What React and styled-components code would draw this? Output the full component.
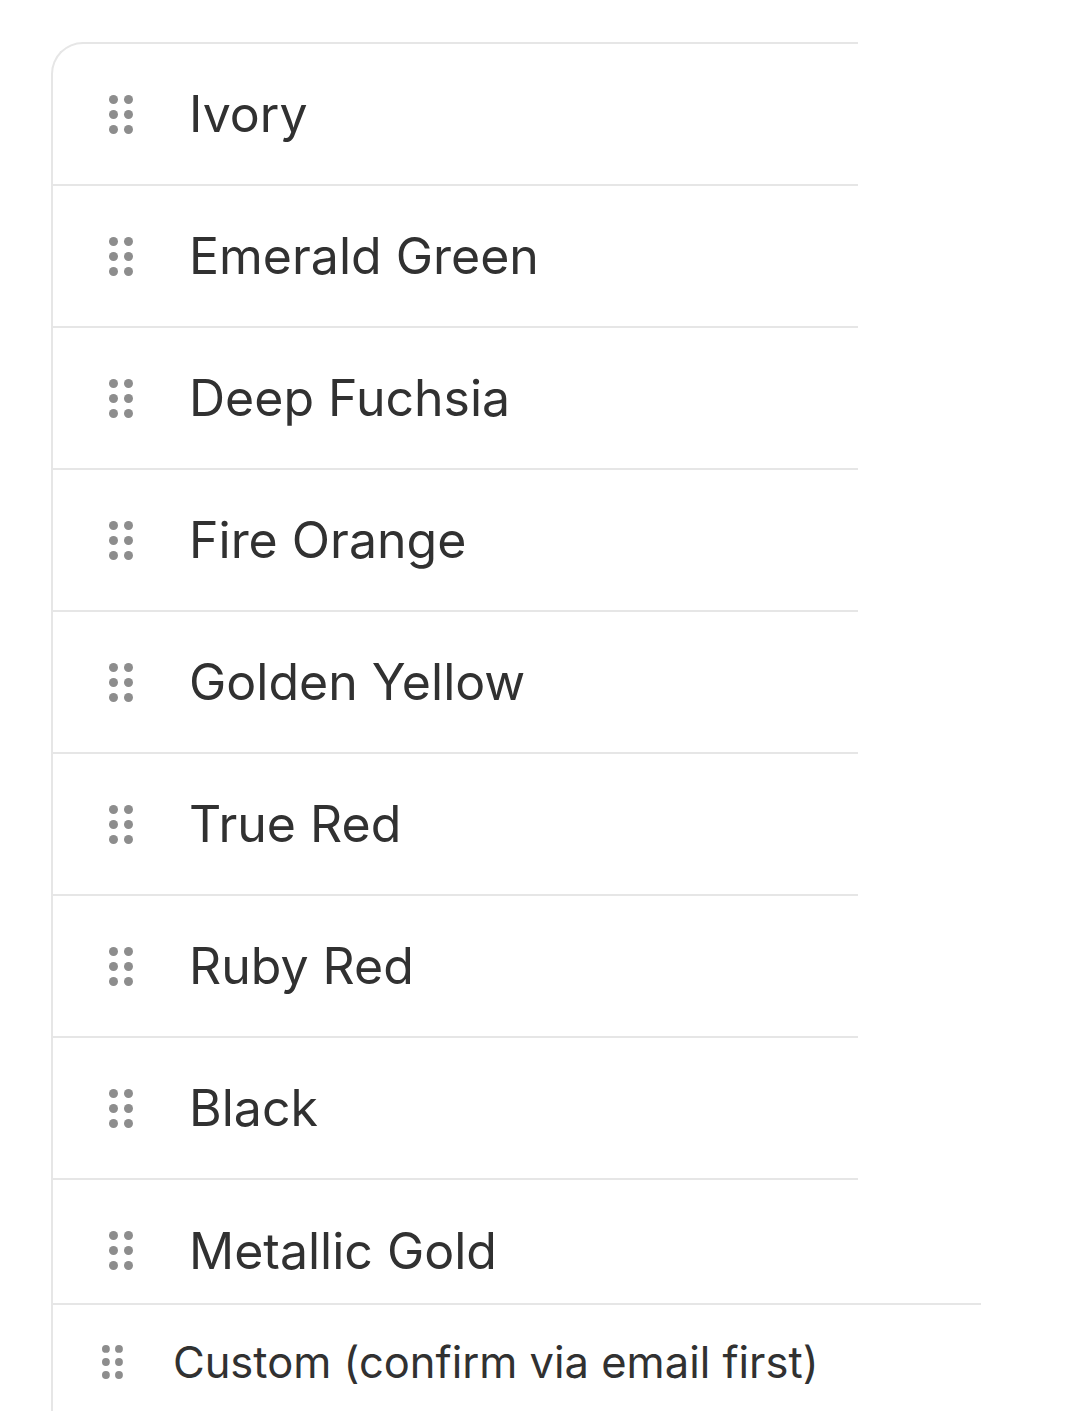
import React from 'react'
import styled, { createGlobalStyle } from 'styled-components'

const GlobalStyle = createGlobalStyle`
  html, body {
    margin: 0;
    padding: 0;
    background: #ffffff;
  }
  body {
    font-family: Inter, "Noto Sans", "Liberation Sans", sans-serif;
    -webkit-font-smoothing: antialiased;
  }
`

const Page = styled.div`
  padding: 42px 0 0 51px;
  height: 1369px;
  overflow: hidden;
`

const List = styled.ul`
  list-style: none;
  margin: 0;
  padding: 0;
  width: 805px;
  border-top: 2px solid #e6e6e6;
  border-left: 2px solid #e6e6e6;
  border-top-left-radius: 32px;
  overflow: hidden;
`

const Row = styled.li`
  display: flex;
  align-items: center;
  box-sizing: border-box;
  height: ${p => p.$short ? 123 : 142}px;
  padding-left: 56px;
  padding-top: ${p => p.$short ? 18 : 0}px;
  border-bottom: 2px solid #e6e6e6;

  &:last-child {
    border-bottom: none;
  }
`

const Label = styled.span`
  margin-left: 56px;
  font-size: ${p => p.$small ? 43.5 : 50}px;
  color: #313131;
  white-space: nowrap;
`

const Dragged = styled.div`
  display: flex;
  align-items: center;
  box-sizing: border-box;
  width: 930px;
  height: 140px;
  padding: 0 0 24px 49px;
  background: #ffffff;
  border-top: 2px solid #e6e6e6;
  border-left: 2px solid #e6e6e6;

  ${Label} {
    margin-left: 50px;
  }
`

const GripSvg = styled.svg`
  flex-shrink: 0;
  display: block;
`

const Grip = ({ scale = 1 }) => (
  <GripSvg width={24 * scale} height={39 * scale} viewBox="0 0 24 39" fill="#8d8d8d">
    <circle cx="4.5" cy="4.5" r="4.5" />
    <circle cx="19.5" cy="4.5" r="4.5" />
    <circle cx="4.5" cy="19.5" r="4.5" />
    <circle cx="19.5" cy="19.5" r="4.5" />
    <circle cx="4.5" cy="34.5" r="4.5" />
    <circle cx="19.5" cy="34.5" r="4.5" />
  </GripSvg>
)

const colours = [
  'Ivory',
  'Emerald Green',
  'Deep Fuchsia',
  'Fire Orange',
  'Golden Yellow',
  'True Red',
  'Ruby Red',
  'Black',
  'Metallic Gold'
]

export default function App() {
  return (
    <Page>
      <GlobalStyle />
      <List>
        {colours.map((name, i) => (
          <Row key={name} $short={i === colours.length - 1}>
            <Grip />
            <Label>{name}</Label>
          </Row>
        ))}
      </List>
      <Dragged>
        <Grip scale={0.87} />
        <Label $small>Custom (confirm via email first)</Label>
      </Dragged>
    </Page>
  )
}
